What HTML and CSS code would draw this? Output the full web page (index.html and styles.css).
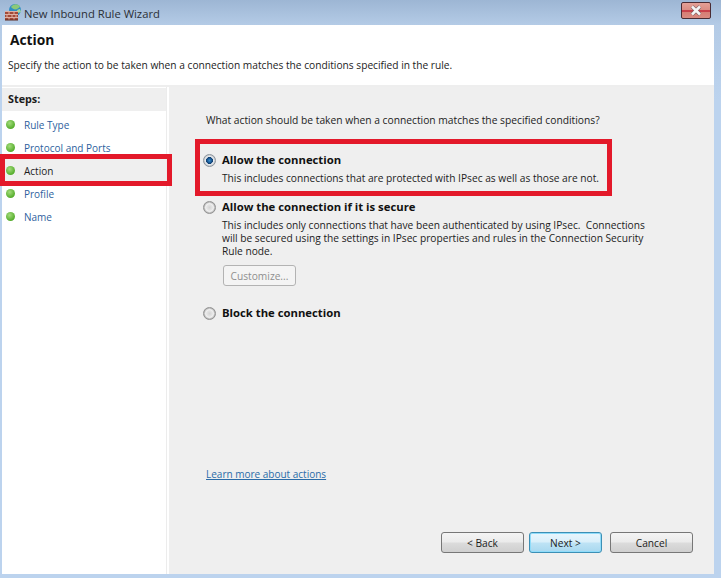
FILE: index.html
```html
<!DOCTYPE html>
<html lang="en">
<head>
<meta charset="utf-8">
<title>New Inbound Rule Wizard</title>
<link rel="stylesheet" href="styles.css">
</head>
<body>
<div class="window">
  <div class="titlebar">
    <svg class="appicon" width="18" height="18" viewBox="0 0 18 18">
      <circle cx="11" cy="6" r="6" fill="#2f8fc4"/>
      <path d="M7 3c2-3.500 7-3.500 9-.5-2 3-6 4.500-9 .5z" fill="#8cc878"/>
      <path d="M13 6l3-1 1 3-3 1z" fill="#a9d896"/>
      <rect x="1" y="7" width="13" height="9" fill="#a24a38"/>
      <path d="M1 7.500h13M1 10.500h13M1 13.500h13M5 7.500v3M10 7.500v3M3 10.500v3M8 10.500v3M12 10.500v3M5 13.500v2.500M10 13.500v2.500" stroke="#dfb0a3" stroke-width="1" fill="none"/>
      <path d="M1 16h13" stroke="#5c2a20" stroke-width="1"/>
    </svg>
    <span class="titletext">New Inbound Rule Wizard</span>
    <button class="close" type="button" aria-label="Close">
      <svg width="14" height="11" viewBox="0 0 14 11">
        <path d="M3 1.500l8 8M11 1.500l-8 8" stroke="#6b5257" stroke-width="3.800" fill="none"/>
        <path d="M3 1.500l8 8M11 1.500l-8 8" stroke="#f6f6f6" stroke-width="2.600" fill="none"/>
      </svg>
    </button>
  </div>
  <div class="client">
    <header class="head">
      <h1>Action</h1>
      <p>Specify the action to be taken when a connection matches the conditions specified in the rule.</p>
    </header>
    <div class="body">
      <nav class="steps">
        <div class="stepshead">Steps:</div>
        <ul class="steplist">
          <li class="step"><span class="dot"></span>Rule Type</li>
          <li class="step"><span class="dot"></span>Protocol and Ports</li>
          <li class="step current"><span class="dot"></span>Action</li>
          <li class="step"><span class="dot"></span>Profile</li>
          <li class="step"><span class="dot"></span>Name</li>
        </ul>
      </nav>
      <main class="panel">
        <p class="question">What action should be taken when a connection matches the specified conditions?</p>
        <div class="option first">
          <span class="radio checked"></span>
          <div class="optbody">
            <div class="optlabel">Allow the connection</div>
            <p class="optdesc">This includes connections that are protected with IPsec as well as those are not.</p>
          </div>
        </div>
        <div class="option second">
          <span class="radio"></span>
          <div class="optbody">
            <div class="optlabel">Allow the connection if it is secure</div>
            <p class="optdesc">This includes only connections that have been authenticated by using IPsec.&nbsp; Connections<br>will be secured using the settings in IPsec properties and rules in the Connection Security<br>Rule node.</p>
            <button class="btn customize" type="button" disabled>Customize...</button>
          </div>
        </div>
        <div class="option third">
          <span class="radio"></span>
          <div class="optbody">
            <div class="optlabel">Block the connection</div>
          </div>
        </div>
        <a class="learn" href="#">Learn more about actions</a>
        <div class="buttons">
          <button class="btn back" type="button">&lt; Back</button>
          <button class="btn next" type="button">Next &gt;</button>
          <button class="btn cancel" type="button">Cancel</button>
        </div>
      </main>
    </div>
  </div>
  <div class="mark markleft"></div>
  <div class="mark markright"></div>
</div>
</body>
</html>
```
FILE: styles.css
```css
* { box-sizing: border-box; }
html, body { margin: 0; padding: 0; }
body { width: 721px; height: 578px; overflow: hidden; font-family: "Open Sans", "Noto Sans", sans-serif; font-size: 10.200px; color: #1c1c1c; }
.window { position: relative; width: 721px; height: 578px; display: flex; flex-direction: column; padding: 0 7px 4px 2px; background: linear-gradient(180deg, #9db6d4 0, #b4cbe6 25px, #bcd3ee 100px, #bcd3ee 100%); }
.titlebar { height: 25px; flex: none; display: flex; align-items: center; }
.appicon { margin-left: 2px; margin-top: 1px; flex: none; }
.titletext { margin-left: 2px; margin-top: 2px; font-size: 11.250px; color: #2b2f36; }
.close { margin-left: auto; margin-right: 3px; margin-top: -4px; width: 30px; height: 17px; padding: 0; display: flex; align-items: center; justify-content: center; border: 1px solid #4a2b33; border-radius: 2px; background: linear-gradient(180deg, #e4a096 0, #da8d84 45%, #c8404a 46%, #c8404a 58%, #d67c74 59%, #d98a80 100%); }
.client { flex: 1; display: flex; flex-direction: column; min-height: 0; }
.head { height: 60px; flex: none; background: #fff; padding: 5px 0 0 6px; }
.head h1 { margin: 0; font-size: 13.800px; line-height: 20px; font-weight: 700; color: #111; padding-left: 2px; }
.head p { margin: 7px 0 0; line-height: 16px; }
.body { flex: 1; display: flex; min-height: 0; background: #fff; border-top: 2px solid #eeeeee; }
.steps { width: 165px; flex: none; background: #fff; border-right: 1px solid #ececec; }
.stepshead { height: 23px; margin-top: 1px; background: #efefef; padding-left: 6px; font-weight: 700; font-size: 10.800px; line-height: 22px; }
.steplist { list-style: none; margin: 2px 0 0; padding: 0; }
.step { height: 23px; display: flex; align-items: center; color: #2e5f9e; padding-left: 4px; font-size: 10px; }
.step.current { color: #1c1c1c; background: #efefef; }
.dot { width: 9px; height: 9px; border-radius: 50%; margin-right: 9px; background: radial-gradient(circle at 40% 35%, #a4dc7c, #55ad2c 70%, #4a9526); flex: none; }
.panel { flex: 1; margin-left: 2px; background: #efefef; display: flex; flex-direction: column; padding: 0 21px 0 34px; min-width: 0; }
.question { margin: 25px 0 0 3px; line-height: 16px; white-space: nowrap; font-size: 10.270px; }
.option { display: flex; align-items: flex-start; }
.first { margin-top: 24px; }
.second { margin-top: 14px; }
.third { margin-top: 19px; }
.radio { width: 13px; height: 13px; margin-top: 2px; flex: none; border-radius: 50%; border: 1px solid #929292; background: radial-gradient(circle closest-side, #d4d4d4 0, #e6e6e6 55%, #f2f2f2 70%, #b4b4b4 100%); }
.radio.checked { border-color: #8c949c; background: radial-gradient(circle closest-side, #3b8fd0 0, #1c5f9c 35%, #123f70 58%, #eef1f4 68%, #c4c8cc 100%); }
.optbody { margin-left: 6px; }
.optlabel { font-weight: 700; font-size: 11.300px; line-height: 16px; color: #111; white-space: nowrap; }
.optdesc { margin: 4px 0 0; line-height: 13px; white-space: nowrap; }
.btn { font: inherit; height: 21px; padding: 0; border: 1px solid #777; border-radius: 3px; background: linear-gradient(180deg, #f4f4f4 0, #ebebeb 48%, #dcdcdc 52%, #cfcfcf 100%); color: #1c1c1c; }
.customize { display: block; width: 73px; margin-top: 7px; margin-left: 1px; border-color: #b3b3b3; background: #f4f4f4; color: #8f8f8f; }
.learn { margin: auto 0 0 3px; color: #2b6ca8; line-height: 16px; align-self: flex-start; font-size: 10px; }
.buttons { display: flex; margin-top: 50px; margin-bottom: 21px; margin-left: 238px; }
.back { width: 83px; }
.next { width: 73px; margin-left: 5px; border-color: #3c8fb5; background: linear-gradient(180deg, #e9f6fd 0, #d9effa 48%, #bee3f5 52%, #a8d8ef 100%); box-shadow: inset 0 0 0 1px #8fdcfa; }
.cancel { width: 83px; margin-left: 8px; }
.mark { position: absolute; border: 5px solid #e3192a; }
.markleft { left: 0; top: 154px; width: 172px; height: 32px; }
.markright { left: 195px; top: 139px; width: 417px; height: 57px; }
```
